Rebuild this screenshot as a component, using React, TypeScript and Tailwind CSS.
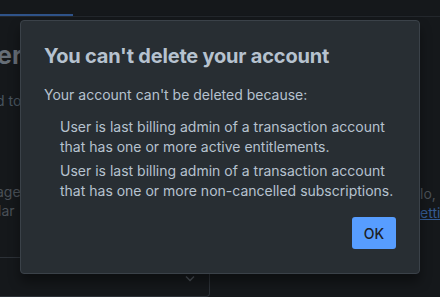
const reasons = [
  'User is last billing admin of a transaction account that has one or more active entitlements.',
  'User is last billing admin of a transaction account that has one or more non-cancelled subscriptions.',
]

export default function App() {
  return (
    <div
      className="relative h-[297px] w-[440px] overflow-hidden bg-[#15181b] text-[#5d6670]"
      style={{ fontFamily: 'Inter, "Noto Sans", sans-serif' }}
    >
      {/* page behind the modal */}
      <div className="flex h-[17px] border-b border-[#23272c]">
        <div className="mt-auto h-[2px] w-[73px] bg-[#2f5389]" />
      </div>
      <div className="grid grid-cols-[210px_210px_1fr]">
        <div className="flex flex-col">
          <div className="-ml-[3px] mt-[22px] text-[25px] font-bold leading-[32px] text-[#666e77]">er</div>
          <div className="-ml-[4px] mt-[20px] text-[14px] leading-[20px] text-[#48545f]">d to</div>
          <div className="-ml-[4px] mt-[71px] text-[14px] leading-[20px] text-[#4a5057]">age</div>
          <div className="-ml-[2px] mt-[-1px] text-[14px] leading-[20px] text-[#4a5057]">lar</div>
          <div className="mt-[36px] flex h-[40px] items-center justify-end rounded-br-[4px] border-b border-r border-t border-[#2c3137] pr-[13px]">
            <svg width="12" height="12" viewBox="0 0 12 12" fill="none" stroke="#4a5057" strokeWidth="1.5" className="mb-[-1px]">
              <path d="M2 4.5l4 4 4-4" />
            </svg>
          </div>
        </div>
        <div />
        <div className="flex flex-col whitespace-nowrap pt-[167px] text-[14px] leading-[20px] text-[#4a5057]">
          <div>lo,</div>
          <div className="-mt-[1px] text-[#345b93] underline">etting</div>
        </div>
      </div>

      {/* modal */}
      <div className="absolute left-[20px] top-[20px] w-[400px] rounded-[4px] border border-[#3b4249] bg-[#282e33] px-[23px] pb-[24px] pt-[23px] shadow-[0_8px_12px_rgba(0,0,0,0.4)]">
        <h1 className="text-[20px] font-bold leading-[24px] tracking-[-0.01em] text-[#b6c2cf]">You can't delete your account</h1>
        <p className="mt-[17px] text-[14px] leading-[20px] text-[#b6c2cf]">Your account can't be deleted because:</p>
        <ul className="mt-[12px] flex flex-col gap-[4px] pl-[16px] text-[14px] leading-[20px] text-[#b6c2cf]">
          {reasons.map((r, i) => (
            <li key={i}>{r}</li>
          ))}
        </ul>
        <div className="mt-[16px] flex justify-end">
          <button className="h-[32px] w-[44px] rounded-[3px] bg-[#579dff] text-[14px] font-medium text-[#1d2125]">OK</button>
        </div>
      </div>
    </div>
  )
}
